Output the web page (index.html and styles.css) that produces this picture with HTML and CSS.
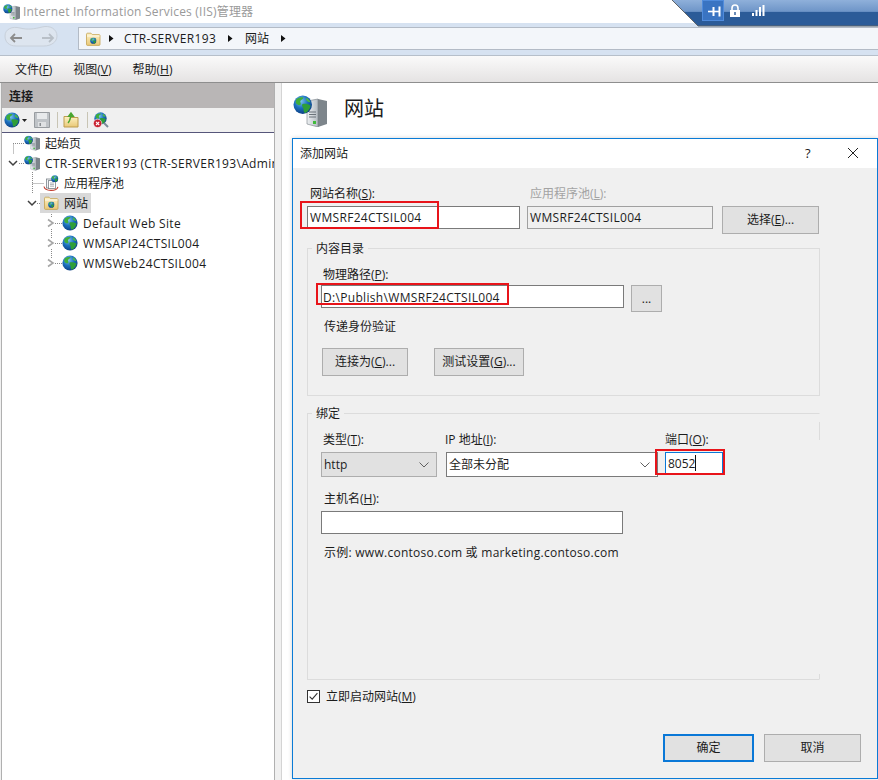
FILE: index.html
```html
<!DOCTYPE html>
<html lang="zh-CN">
<head>
<meta charset="utf-8">
<title>Internet Information Services (IIS)管理器</title>
<link rel="stylesheet" href="styles.css">
</head>
<body>
<svg class="defs" aria-hidden="true">
  <defs>
    <radialGradient id="gGlobe" cx="40%" cy="30%" r="75%">
      <stop offset="0" stop-color="#7cc4ee"/><stop offset=".5" stop-color="#1b6fbd"/><stop offset="1" stop-color="#0c3a7e"/>
    </radialGradient>
    <linearGradient id="gServer" x1="0" x2="1" y1="0" y2="0">
      <stop offset="0" stop-color="#eef1f3"/><stop offset="1" stop-color="#b4bbc1"/>
    </linearGradient>
    <linearGradient id="gFolder" x1="0" x2="0" y1="0" y2="1">
      <stop offset="0" stop-color="#fdf2c4"/><stop offset="1" stop-color="#e9c877"/>
    </linearGradient>
    <linearGradient id="gTray" x1="0" x2="0" y1="0" y2="1">
      <stop offset="0" stop-color="#8fb0da"/><stop offset=".44" stop-color="#6e95c8"/><stop offset=".46" stop-color="#2b5b98"/><stop offset="1" stop-color="#2b5b98"/>
    </linearGradient>
    <symbol id="globe" viewBox="0 0 16 16">
      <circle cx="8" cy="8" r="7.6" fill="url(#gGlobe)"/>
      <path d="M3 3.2C5 2 7 1.6 8.6 2.2 8.2 3.6 6.6 3.6 6 5 5.6 6.2 7 7 6.2 8 5.2 8.8 3.6 8 2.6 7 1.9 6 2.2 4.2 3 3.2Z" fill="#3fae3a"/>
      <path d="M7.6 7.6C10 6.8 12 7.4 14.4 8.6 14.2 11 12.4 13.6 10.2 14.8 8.6 14.4 8.6 12.4 8.6 11.2 8 10 7 8.6 7.6 7.6Z" fill="#2f9e38"/>
      <path d="M11 2.2C12.6 3 13.8 4.4 14.4 6 13 6 11.4 5.4 10.8 4.2Z" fill="#4db848"/>
    </symbol>
    <symbol id="globeserver" viewBox="0 0 34 32">
      <path d="M25 4 34 6V29L25 32Z" fill="#7d858b"/>
      <path d="M14 6 25 4V32L14 29Z" fill="url(#gServer)" stroke="#767e84" stroke-width=".6"/>
      <path d="M16 17H23M16 19.5H23M16 22H23" stroke="#6b737a" stroke-width="1"/>
      <rect x="20" y="26" width="3" height="3" fill="#3fbb3a"/>
      <use href="#globe" x="0" y="0" width="19.5" height="19.5"/>
    </symbol>
    <symbol id="folder" viewBox="0 0 16 16">
      <path d="M1.5 3.2C1.5 2.6 2 2.2 2.6 2.2H6L7.4 3.6H14C14.6 3.6 15 4 15 4.6V13.4C15 14 14.6 14.4 14 14.4H2.5C1.9 14.4 1.5 14 1.5 13.4Z" fill="url(#gFolder)" stroke="#c4a252" stroke-width=".8"/>
      <path d="M2 5H14.6" stroke="#fff" stroke-width=".8"/>
      <use href="#globe" x="5" y="6.4" width="6.6" height="6.6"/>
    </symbol>
    <symbol id="pool" viewBox="0 0 16 16">
      <rect x="3.5" y="4" width="7" height="9" fill="#f3f5f7" stroke="#7b8288" stroke-width=".8"/>
      <rect x="5.5" y="5.6" width="7" height="8" fill="#fff" stroke="#7b8288" stroke-width=".8"/>
      <path d="M7 8H11M7 9.6H11M7 11.2H11" stroke="#8a9096" stroke-width=".7"/>
      <use href="#globe" x="8" y="0" width="7.5" height="7.5"/>
      <path d="M1 11.5C1.5 14.4 4 15.4 8 15.4S14.2 14.4 15 11.8" fill="none" stroke="#c0392b" stroke-width="1.1"/>
    </symbol>
    <symbol id="arrow" viewBox="0 0 5 7"><path d="M0 0 4.5 3.5 0 7Z" fill="#111"/></symbol>
    <symbol id="chev" viewBox="0 0 10 10"><path d="M2 1.5 7 5 2 8.5" fill="none" stroke="#a6a6a6" stroke-width="1.6"/></symbol>
    <symbol id="chevdown" viewBox="0 0 10 10"><path d="M1 3 5 7 9 3" fill="none" stroke="#404040" stroke-width="1.5"/></symbol>
    <symbol id="combo" viewBox="0 0 10 6"><path d="M.5 .5 5 5 9.5 .5" fill="none" stroke="#606060" stroke-width="1"/></symbol>
  </defs>
</svg>

<div class="app">
  <header class="titlebar">
    <svg class="ic-title"><use href="#globeserver"/></svg>
    <span class="title-text">Internet Information Services (IIS)管理器</span>
    <svg class="tray" viewBox="0 0 206 27" aria-hidden="true">
      <path d="M0 0H206V26H26Z" fill="url(#gTray)"/>
      <path d="M0 0 26 26H206" fill="none" stroke="#5f6468" stroke-width="1"/>
      <rect x="30.5" y=".5" width="21" height="20" fill="#3a74c2" stroke="#4f8bdc"/>
      <path d="M36 11.5H47" stroke="#fff" stroke-width="1.6"/><path d="M40.5 7H42.500V16H40.500ZM46.500 6.500H48.500V16.500H46.500Z" fill="#fff"/>
      <rect x="58" y="10" width="10" height="7" fill="#fff"/><path d="M60 10V8A3 3 0 0 1 66 8V10" fill="none" stroke="#fff" stroke-width="1.6"/><rect x="62.300" y="12" width="1.400" height="3" fill="#2b5b98"/>
      <path d="M80 13h2v3h-2zM83.500 10h2v6h-2zM87 7h2v9h-2zM90.500 5h2v11h-2z" fill="#fff"/>
    </svg>
  </header>

  <nav class="navbar">
    <div class="navbtns">
      <svg class="nav-arrows" viewBox="0 0 54 22" aria-hidden="true">
        <path d="M1 11C1 4 8 1 16 3 24 5 30 4 38 2 46 0 53 4 53 11 53 17 47 21 40 21H12C5 21 1 17 1 11Z" fill="#dde5ef" stroke="#c8d0da"/>
        <path d="M18 13H7M11 9 7 13 11 17" fill="none" stroke="#8c8c8c" stroke-width="1.800"/>
        <path d="M38 13H49M45 9 49 13 45 17" fill="none" stroke="#b8bfc7" stroke-width="1.800"/>
      </svg>
    </div>
    <div class="address">
      <svg class="ic-addr"><use href="#folder"/></svg>
      <svg class="crumb-arrow"><use href="#arrow"/></svg>
      <span class="lat">CTR-SERVER193</span>
      <svg class="crumb-arrow"><use href="#arrow"/></svg>
      <span>网站</span>
      <svg class="crumb-arrow"><use href="#arrow"/></svg>
    </div>
  </nav>

  <div class="menubar">
    <span>文件(<u>F</u>)</span>
    <span>视图(<u>V</u>)</span>
    <span>帮助(<u>H</u>)</span>
  </div>

  <main class="main">
    <aside class="left">
      <div class="left-head">连接</div>
      <div class="toolbar">
        <svg class="ic16"><use href="#globe"/></svg>
        <svg class="caret" viewBox="0 0 5 3"><path d="M0 0H5L2.500 3Z" fill="#222"/></svg>
        <svg class="ic16 floppy" viewBox="0 0 16 16">
          <path d="M.5 .5H15.500V15.500H.5Z" fill="#bfc3c7" stroke="#989ca0"/><rect x="3" y="1" width="10" height="6" fill="#e8eaec"/><rect x="4" y="10" width="8" height="5" fill="#dfe1e3"/><rect x="5.500" y="11" width="1.500" height="3" fill="#8a8e92"/>
        </svg>
        <i class="tsep"></i>
        <svg class="ic16 folder-up" viewBox="0 0 16 16">
          <path d="M1 4.500H6L7 5.500H15V15H1Z" fill="url(#gFolder)" stroke="#bd9c4e"/>
          <path d="M5 11C7 9 7.600 6 8 3M8 1 5.600 4.200H10.400Z" fill="#4aa52f" stroke="#4aa52f" stroke-width="1.400"/>
        </svg>
        <i class="tsep tsep2"></i>
        <svg class="ic16 disconnect" viewBox="0 0 16 16">
          <use href="#globe" x="1" y="0" width="13" height="13"/>
          <path d="M11 11 15 15" stroke="#7b8b99" stroke-width="2"/>
          <circle cx="4.600" cy="11.400" r="4.200" fill="#c8202f" stroke="#fff" stroke-width=".6"/>
          <path d="M3 9.800 6.200 13M6.200 9.800 3 13" stroke="#fff" stroke-width="1.100"/>
        </svg>
      </div>
      <div class="tree">
        <svg class="tree-lines" aria-hidden="true">
          <path d="M13 143.500H25M13.500 143.500V154M19 163.500H25M32.500 172V193M32.500 183.500H44M37 203.500H41M51.500 214V218M51.500 229V238M51.500 249V258M55 223.500H62M55 243.500H62M55 263.500H62" transform="translate(0 -133)" fill="none" stroke="#8a8a8a" stroke-dasharray="1 1"/>
        </svg>
        <div class="row lv1"><i class="tw"></i><svg class="ic16"><use href="#globeserver"/></svg><span>起始页</span></div>
        <div class="row lv1"><svg class="tw"><use href="#chevdown"/></svg><svg class="ic16"><use href="#globeserver"/></svg><span class="lat">CTR-SERVER193 (CTR-SERVER193\Administrator)</span></div>
        <div class="row lv2"><i class="tw"></i><svg class="ic16"><use href="#pool"/></svg><span>应用程序池</span></div>
        <div class="row lv2 selected"><svg class="tw"><use href="#chevdown"/></svg><svg class="ic16"><use href="#folder"/></svg><span>网站</span></div>
        <div class="row lv3"><svg class="tw"><use href="#chev"/></svg><svg class="ic16"><use href="#globe"/></svg><span class="lat">Default Web Site</span></div>
        <div class="row lv3"><svg class="tw"><use href="#chev"/></svg><svg class="ic16"><use href="#globe"/></svg><span class="lat">WMSAPI24CTSIL004</span></div>
        <div class="row lv3"><svg class="tw"><use href="#chev"/></svg><svg class="ic16"><use href="#globe"/></svg><span class="lat">WMSWeb24CTSIL004</span></div>
      </div>
    </aside>

    <section class="right">
      <div class="page-head">
        <svg class="ic-head"><use href="#globeserver"/></svg>
        <h1>网站</h1>
      </div>
    </section>
  </main>

  <div class="dialog">
    <div class="dlg-title">
      <span class="dlg-name">添加网站</span>
      <span class="dlg-help">?</span>
      <svg class="dlg-close" viewBox="0 0 12 12"><path d="M1 1 11 11M11 1 1 11" stroke="#222" stroke-width="1"/></svg>
    </div>
    <div class="dlg-body">
      <div class="site-grid">
        <label>网站名称(<u>S</u>):</label>
        <label class="disabled">应用程序池(<u>L</u>):</label>
        <i></i>
        <div class="input">WMSRF24CTSIL004</div>
        <div class="input readonly">WMSRF24CTSIL004</div>
        <button class="btn btn-tall">选择(<u>E</u>)...</button>
      </div>

      <fieldset class="group group-content">
        <legend>内容目录</legend>
        <label>物理路径(<u>P</u>):</label>
        <div class="path-row">
          <div class="input path-input">D:\Publish\WMSRF24CTSIL004</div>
          <button class="btn btn-dots">...</button>
        </div>
        <p class="pass">传递身份验证</p>
        <div class="pass-btns">
          <button class="btn btn-conn">连接为(<u>C</u>)...</button>
          <button class="btn btn-test">测试设置(<u>G</u>)...</button>
        </div>
      </fieldset>

      <fieldset class="group group-bind">
        <legend>绑定</legend>
        <i class="edge edge-top"></i>
        <i class="edge edge-bottom"></i>
        <div class="bind-grid">
          <label>类型(<u>T</u>):</label>
          <label class="ip-label">IP 地址(<u>I</u>):</label>
          <label>端口(<u>O</u>):</label>
          <div class="select select-gray"><span>http</span><svg class="combo"><use href="#combo"/></svg></div>
          <div class="select select-ip"><span>全部未分配</span><svg class="combo"><use href="#combo"/></svg></div>
          <div class="input port"><span>8052</span><i class="cursor"></i></div>
        </div>
        <label class="host-label">主机名(<u>H</u>):</label>
        <div class="input host"></div>
        <p class="example">示例: www.contoso.com 或 marketing.contoso.com</p>
      </fieldset>

      <div class="start-row">
        <svg class="check" viewBox="0 0 13 13"><rect x=".5" y=".5" width="12" height="12" fill="#fff" stroke="#333"/><path d="M2.600 6.600 5.200 9.200 10.400 3.200" fill="none" stroke="#333" stroke-width="1.100"/></svg>
        <span>立即启动网站(<u>M</u>)</span>
      </div>

      <div class="dlg-foot">
        <button class="btn btn-ok">确定</button>
        <button class="btn btn-cancel">取消</button>
      </div>
    </div>
    <i class="mark mark-name"></i>
    <i class="mark mark-path"></i>
    <i class="mark mark-port"></i>
  </div>
</div>
</body>
</html>
```

FILE: styles.css
```css
* { box-sizing: border-box; }
html, body { margin: 0; height: 100%; overflow: hidden; background: #fff; }
body { font: 12px/18px "Open Sans", "Noto Sans CJK SC", sans-serif; color: #1c1c1c; }
svg { display: block; flex: none; }
.defs { position: absolute; width: 0; height: 0; }
.app { position: relative; width: 878px; height: 780px; display: flex; flex-direction: column; }
.lat { letter-spacing: .32px; }

.titlebar { position: relative; height: 23px; display: flex; align-items: center; background: #fff; flex: none; }
.ic-title { width: 17px; height: 16px; margin-left: 3px; }
.title-text { margin-left: 3px; color: #9a9a9a; letter-spacing: .2px; }
.tray { position: absolute; left: 672px; top: 0; width: 206px; height: 27px; z-index: 2; }

.navbar { height: 33px; flex: none; display: flex; background: #d6e2f1; border-bottom: 1px solid #b6bfca; padding-top: 4px; }
.navbtns { width: 78px; padding-left: 4px; }
.nav-arrows { width: 54px; height: 22px; margin-top: -2px; }
.address { flex: 1; height: 23px; background: #f3f6fa; border: solid #b3bbc6; border-width: 1px 0 1px 1px; display: flex; align-items: center; padding-left: 6px; }
.ic-addr { width: 16px; height: 16px; }
.crumb-arrow { width: 5px; height: 7px; margin: 0 12px; }
.ic-addr + .crumb-arrow { margin: 0 10px 0 8px; }

.menubar { height: 27px; flex: none; display: flex; align-items: center; padding-left: 15px; gap: 21px; background: linear-gradient(#fafafa, #e5e3e3); border-bottom: 1px solid #8e8e8e; }
.menubar span { padding-top: 2px; }

.main { flex: 1; display: flex; background: #f0f0f0; min-height: 0; }
.left { width: 274px; margin-left: 1px; flex: none; display: flex; flex-direction: column; border: solid #b0b0b0; border-width: 0 1px; background: #fff; }
.left-head { height: 25px; flex: none; background: #b9b6b6; padding-left: 7px; line-height: 27px; font-weight: 600; }
.toolbar { height: 25px; flex: none; display: flex; align-items: center; background: #f0f0f0; border-bottom: 1px solid #56567a; padding-left: 2px; }
.ic16 { width: 16px; height: 16px; }
.caret { width: 5px; height: 3px; margin-left: 2px; }
.floppy { margin-left: 7px; }
.tsep { width: 1px; height: 16px; background: #c8c4b4; margin-left: 7px; }
.folder-up { margin-left: 5px; }
.tsep2 { margin-left: 8px; }
.disconnect { margin-left: 5px; }

.tree { position: relative; flex: 1; overflow: hidden; }
.tree-lines { position: absolute; left: -2px; top: 0; width: 100px; height: 140px; }
.row { position: relative; height: 20px; display: flex; align-items: center; white-space: nowrap; }
.row span { margin-left: 5px; padding-top: 2px; }
.tw { width: 10px; height: 10px; flex: none; }
.lv1 { padding-left: 6px; }
.lv1 .ic16 { margin-left: 6px; }
.lv2 { padding-left: 25px; }
.lv2 .ic16 { margin-left: 6px; }
.lv3 { padding-left: 44px; }
.lv3 span { margin-left: 5px; }
.lv3 .ic16 { margin-left: 6px; }
.selected::before { content: ""; position: absolute; left: 38px; top: 0; width: 51px; height: 20px; background: #d9d9d9; }
.selected > * { position: relative; }

.right { flex: 1; margin-left: 6px; background: #fff; border-left: 1px solid #d4d4d4; }
.page-head { display: flex; align-items: center; height: 50px; padding-left: 11px; }
.ic-head { width: 34px; height: 32px; margin-top: 6px; }
.page-head h1 { margin: 0 0 0 17px; padding-top: 2px; font-size: 20px; font-weight: 400; line-height: 28px; }

.dialog { position: absolute; left: 292px; top: 138px; width: 586px; height: 641px; background: #f0f0f0; border: 1px solid #0a7bd6; box-shadow: 0 0 4px rgba(0,0,0,.18); z-index: 3; }
.dlg-title { height: 29px; background: #fff; display: flex; align-items: center; padding: 0 0 2px 7px; }
.dlg-name { flex: 1; padding-top: 2px; }
.dlg-help { width: 14px; font-size: 13px; }
.dlg-close { width: 12px; height: 12px; margin: 0 18px 0 28px; }

.dlg-body { padding: 16px 0 0 14px; }
.dlg-body label { display: block; height: 18px; line-height: 20px; }
.disabled { color: #a3a3a3; }
.site-grid { display: grid; grid-template-columns: 213px 186px 97px; column-gap: 7px; row-gap: 4px; align-items: start; }
.site-grid label { padding-left: 3px; }
.site-grid .btn { margin-left: 2px; }
.input { height: 23px; background: #fff; border: 1px solid #7a7a7a; padding: 0 2px; line-height: 21px; white-space: nowrap; letter-spacing: .32px; }
.readonly { background: #f0f0f0; border-color: #a0a0a0; }
.btn { display: block; font: inherit; color: #1c1c1c; background: #e1e1e1; border: 1px solid #adadad; padding: 0; margin: 0; text-align: center; }
.btn-tall { width: 97px; height: 28px; }

.group { margin: 5px 0 0; width: 513px; border: 1px solid #dcdcdc; padding: 8px 0 0 13px; min-width: 0; }
.group legend { padding: 0 4px; margin-left: -9px; height: 18px; line-height: 20px; }
.group-content { height: 157px; }
.group-content > label { padding-left: 2px; }
.path-row { display: flex; gap: 7px; margin-top: 2px; align-items: flex-start; }
.path-input { width: 303px; padding-left: 1px; line-height: 23px; }
.btn-dots { width: 31px; height: 27px; }
.pass { margin: 6px 0 0 3px; }
.pass-btns { display: flex; gap: 26px; margin: 12px 0 0 1px; }
.btn-conn { width: 86px; height: 28px; }
.btn-test { width: 90px; height: 28px; }

.group-bind { position: relative; margin-top: 8px; height: 276px; border-right-color: transparent; }
.edge { position: absolute; right: -1px; width: 1px; background: #dcdcdc; }
.edge-top { top: 0; height: 18px; }
.edge-bottom { bottom: 0; height: 5px; }
.bind-grid { display: grid; grid-template-columns: 125px 219px 58px; row-gap: 4px; }
.bind-grid label:first-child { padding-left: 2px; }
.ip-label { margin-left: -1px; }
.select { height: 25px; display: flex; align-items: center; justify-content: space-between; background: #fff; border: 1px solid #7a7a7a; padding: 0 7px 0 2px; }
.select-gray { width: 116px; background: #e1e1e1; border-color: #adadad; }
.select-ip { width: 212px; }
.combo { width: 10px; height: 6px; }
.port { height: 22px; border-color: #0a78d7; display: flex; align-items: center; letter-spacing: 0; }
.cursor { width: 1px; height: 16px; background: #111; }
.host-label { margin: 12px 0 4px 3px; }
.host { width: 302px; }
.example { margin: 10px 0 0 3px; letter-spacing: .26px; }

.start-row { display: flex; align-items: center; gap: 6px; margin-top: 6px; }
.start-row span { padding-top: 2px; }
.check { width: 13px; height: 13px; }
.dlg-foot { display: flex; justify-content: flex-end; gap: 10px; margin: 28px 16px 0 0; }
.btn-ok { width: 91px; height: 28px; border: 2px solid #0a78d7; }
.btn-cancel { width: 97px; height: 28px; }

.mark { position: absolute; border: 2px solid #e8141a; pointer-events: none; }
.mark-name { left: 7px; top: 62px; width: 139px; height: 28px; }
.mark-path { left: 23px; top: 144px; width: 193px; height: 22px; }
.mark-port { left: 362px; top: 310px; width: 70px; height: 26px; }
```
